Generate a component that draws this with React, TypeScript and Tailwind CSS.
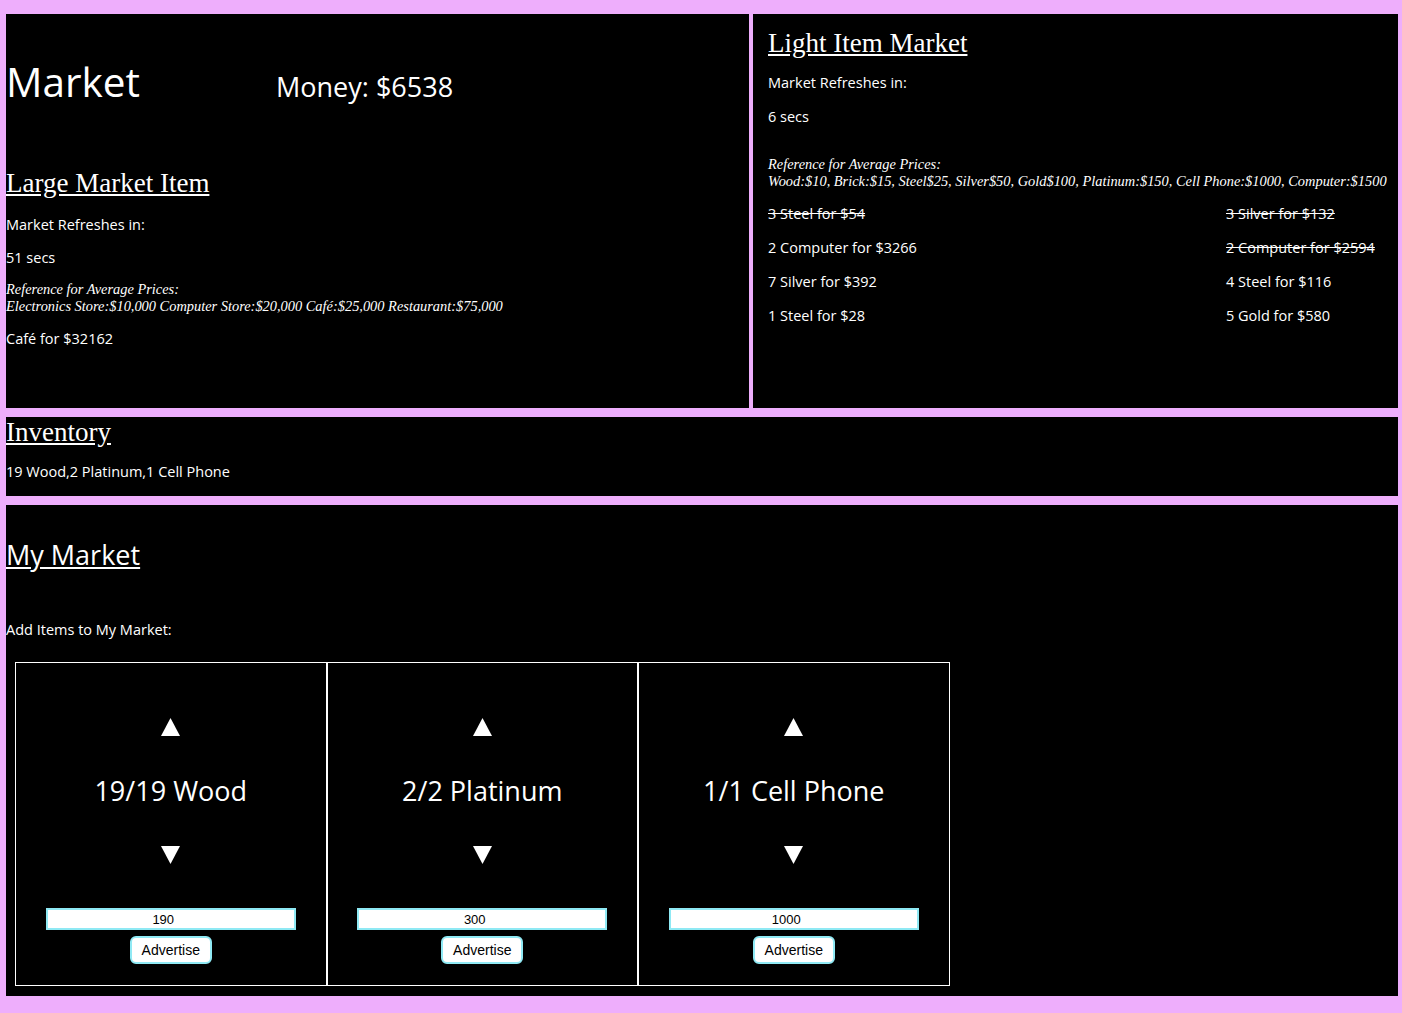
import { useState } from 'react';

type LightItem = {
  label: string;
  sold: boolean;
};

type StockItem = {
  name: string;
  count: number;
  price: number;
};

const leftItems: LightItem[] = [
  { label: '3 Steel for $54', sold: true },
  { label: '2 Computer for $3266', sold: false },
  { label: '7 Silver for $392', sold: false },
  { label: '1 Steel for $28', sold: false },
];

const rightItems: LightItem[] = [
  { label: '3 Silver for $132', sold: true },
  { label: '2 Computer for $2594', sold: true },
  { label: '4 Steel for $116', sold: false },
  { label: '5 Gold for $580', sold: false },
];

const stock: StockItem[] = [
  { name: 'Wood', count: 19, price: 190 },
  { name: 'Platinum', count: 2, price: 300 },
  { name: 'Cell Phone', count: 1, price: 1000 },
];

const sans = "font-['Open_Sans',sans-serif]";
const serif = "font-['Liberation_Serif',serif]";

const Triangle = ({ up }: { up: boolean }) => (
  <svg width="19" height="18" viewBox="0 0 19 18" className="block">
    {up ? <polygon points="9.5,0 19,18 0,18" fill="white" /> : <polygon points="0,0 19,0 9.5,18" fill="white" />}
  </svg>
);

const StockCard = ({ item }: { item: StockItem }) => {
  const [price, setPrice] = useState(String(item.price));

  return (
    <div className="flex h-[324px] w-[311.5px] flex-col items-center border border-white">
      <div className="mt-[55px]">
        <Triangle up />
      </div>
      <div className={`${sans} mt-[36px] text-[27px] leading-[37px]`}>
        {item.count}/{item.count} {item.name}
      </div>
      <div className="mt-[37px]">
        <Triangle up={false} />
      </div>
      <input
        type="number"
        value={price}
        onChange={(e) => setPrice(e.target.value)}
        className="mt-[44px] h-[22px] w-[250px] border-2 border-[#8fe9f4] bg-white text-center font-['Liberation_Sans',sans-serif] text-[13px] text-black outline-none"
      />
      <button
        type="button"
        className="mt-[6px] h-[28px] w-[82px] rounded-[6px] border-2 border-[#8fe9f4] bg-white font-['Liberation_Sans',sans-serif] text-[14px] text-black"
      >
        Advertise
      </button>
    </div>
  );
};

const App = () => {
  return (
    <div className="min-h-[1013px] bg-[#eeaefc] pb-[17px] pl-[6px] pr-[4px] pt-[14px] text-white">
      <div className="flex h-[394px] gap-[4px]">
        <section className={`${sans} w-[743px] bg-black`}>
          <div className="mt-[43px] flex h-[50px] items-baseline">
            <h1 className="w-[270px] text-[40.5px] leading-[50px]">Market</h1>
            <div className="text-[27px] leading-[50px]">Money: $6538</div>
          </div>
          <h2 className={`${serif} mt-[61px] text-[27px] leading-[31px] underline`}>Large Market Item</h2>
          <p className="mt-[16px] text-[14.5px] leading-[19px]">Market Refreshes in:</p>
          <p className="mt-[14px] text-[14.5px] leading-[19px]">51 secs</p>
          <div className={`${serif} mt-[14px] text-[14.4px] italic leading-[17px]`}>
            <div>Reference for Average Prices:</div>
            <div>Electronics Store:$10,000 Computer Store:$20,000 Café:$25,000 Restaurant:$75,000</div>
          </div>
          <p className="mt-[14px] text-[14.5px] leading-[19px]">Café for $32162</p>
        </section>

        <section className={`${sans} flex-1 bg-black pl-[15px]`}>
          <h2 className={`${serif} mt-[14px] text-[27px] leading-[31px] underline`}>Light Item Market</h2>
          <p className="mt-[14px] text-[14.5px] leading-[20px]">Market Refreshes in:</p>
          <p className="mt-[14px] text-[14.5px] leading-[20px]">6 secs</p>
          <div className={`${serif} mt-[29px] text-[14.4px] italic leading-[17px]`}>
            <div>Reference for Average Prices:</div>
            <div>
              Wood:$10, Brick:$15, Steel$25, Silver$50, Gold$100, Platinum:$150, Cell Phone:$1000, Computer:$1500
            </div>
          </div>
          <div className="mt-[14px] grid grid-cols-[458px_auto] gap-y-[14px] text-[14.5px] leading-[20px]">
            {leftItems.map((left, i) => (
              <>
                <div key={`l${i}`} className={left.sold ? 'line-through' : ''}>
                  {left.label}
                </div>
                <div key={`r${i}`} className={rightItems[i].sold ? 'line-through' : ''}>
                  {rightItems[i].label}
                </div>
              </>
            ))}
          </div>
        </section>
      </div>

      <section className={`${sans} mt-[9px] h-[79px] bg-black`}>
        <h2 className={`${serif} text-[27px] leading-[31px] underline`}>Inventory</h2>
        <p className="mt-[14px] text-[14.5px] leading-[19px]">19 Wood,2 Platinum,1 Cell Phone</p>
      </section>

      <section className={`${sans} mt-[9px] h-[491px] bg-black`}>
        <h2 className="pt-[31px] text-[27px] leading-[37px] underline">My Market</h2>
        <p className="mt-[47px] text-[14.5px] leading-[19px]">Add Items to My Market:</p>
        <div className="ml-[9px] mt-[23px] flex">
          {stock.map((item) => (
            <StockCard key={item.name} item={item} />
          ))}
        </div>
      </section>
    </div>
  );
};

export default App;
